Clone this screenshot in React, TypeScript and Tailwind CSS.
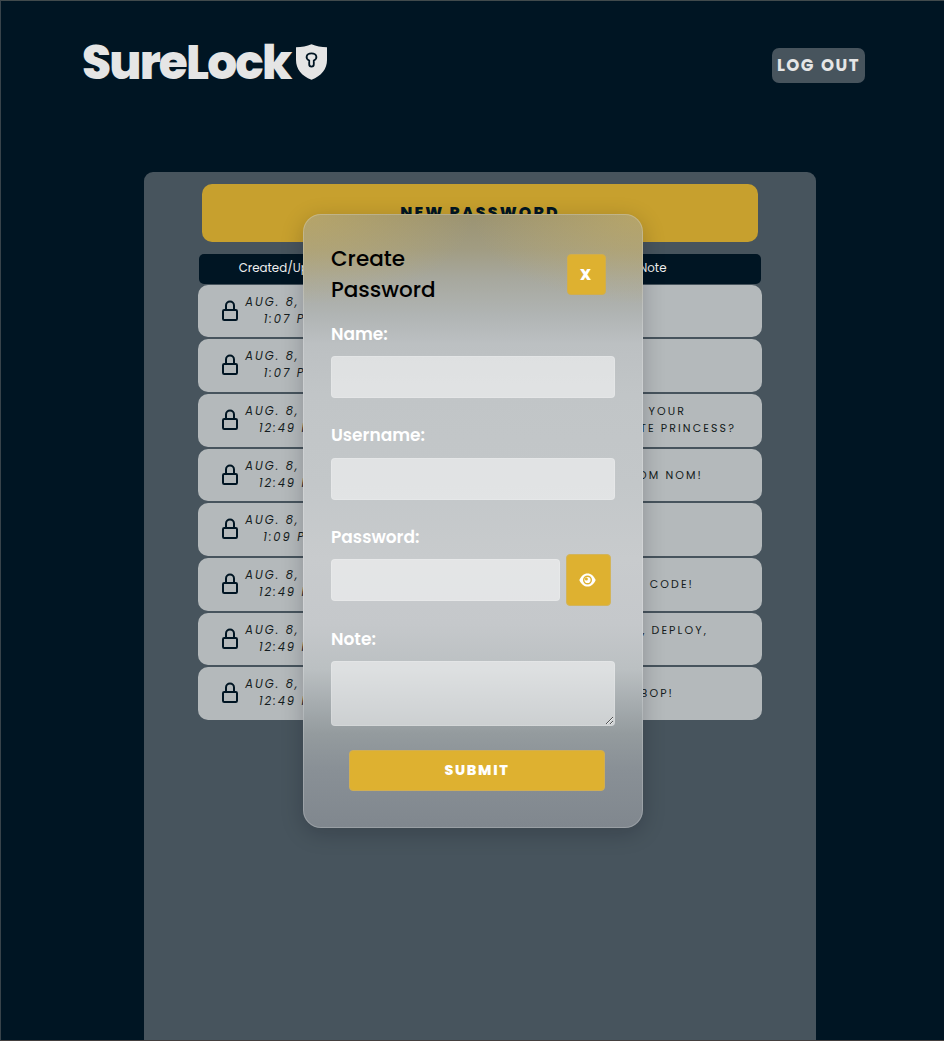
import React from "react";
import { FaEye } from "react-icons/fa";

type Row = { time: string; note: { text: string; inset: string }[] };

const rows: Row[] = [
  { time: "1:07 PM", note: [] },
  { time: "1:07 PM", note: [] },
  {
    time: "12:49 PM",
    note: [
      { text: "IS THIS YOUR", inset: "pr-[76px]" },
      { text: "FAVORITE PRINCESS?", inset: "pr-[26px]" },
    ],
  },
  { time: "12:49 PM", note: [{ text: "NOM NOM NOM!", inset: "pr-[59px]" }] },
  { time: "1:09 PM", note: [] },
  { time: "12:49 PM", note: [{ text: "I LOVE CODE!", inset: "pr-[68px]" }] },
  {
    time: "12:49 PM",
    note: [
      { text: "BUILD, DEPLOY,", inset: "pr-[54px]" },
      { text: "REPEAT", inset: "pr-[125px]" },
    ],
  },
  { time: "12:49 PM", note: [{ text: "BEEP BOP!", inset: "pr-[88px]" }] },
];

function Lock() {
  return (
    <svg className="ml-[23px] mt-[15px] h-[22px] w-[18px] shrink-0" viewBox="0 0 18 22" fill="none" stroke="#001523" strokeWidth="2">
      <rect x="2" y="10" width="14" height="10" rx="1.2" />
      <path d="M5 10V5.500a4 4 0 0 1 8 0V10" />
    </svg>
  );
}

function Shield() {
  return (
    <svg className="mt-[14px] h-[36px] w-[32px]" viewBox="0 0 32 36">
      <path d="M16.500 .3C21 2.300 26.500 3 32 3.200V16C32 25 26.500 32 16.500 35.700C6.500 32 1 25 1 16V3.200C6.500 3 12 2.300 16.500 .3Z" fill="#e5e5e5" />
      <path d="M14.200 16.600C10.200 14.800 10.800 9.400 16.500 9.400C22.200 9.400 22.800 14.800 18.800 16.600V20.300a2.300 2.300 0 0 1-4.600 0Z" fill="none" stroke="#001523" strokeWidth="1.800" />
    </svg>
  );
}

const label = "block h-[22px] whitespace-nowrap text-[17px] font-semibold leading-[22px] text-white";
const field = "block rounded-[4px] border border-white/15 bg-white/50 outline-none";

export default function App() {
  return (
    <div className="relative h-[1041px] w-[944px] overflow-hidden bg-[#001523] font-['Poppins','Inter',sans-serif]">
      <header className="flex h-[172px] items-start justify-between pl-[82px] pr-[79px] pt-[30px]">
        <div className="flex items-start">
          <h1 className="w-[213px] whitespace-nowrap pt-px text-[47px] font-extrabold leading-[64px] tracking-[-1.850px] text-[#e5e5e5]">SureLock</h1>
          <Shield />
        </div>
        <button className="mt-[18px] h-[35px] w-[93px] whitespace-nowrap rounded-[7px] bg-[#47545d] pt-px text-[16.600px] font-bold tracking-[1.500px] text-[#e5e5e5] [word-spacing:1px]">LOG OUT</button>
      </header>
      <main className="ml-[144px] h-[900px] w-[672px] rounded-t-[9px] bg-[#47545d] px-[54px] pt-[12px]">
        <button className="mx-[4px] block h-[58px] w-[556px] rounded-[10px] bg-[#c7a02e] text-[15.800px] font-extrabold tracking-[2.150px] text-[#001523]">NEW PASSWORD</button>
        <div className="mx-px mt-[12px] flex h-[30px] items-center rounded-[5px] bg-[#001523] pb-px text-[11.800px] text-[#f0f0f0]">
          <span className="w-[185px] text-center">Created/Updated</span>
          <span className="w-[188px] text-center">Name</span>
          <span className="grow pl-[67px]">Note</span>
        </div>
        <div className="mt-[0.800px] flex flex-col gap-[2px]">
          {rows.map((row, i) => (
            <div key={i} className="flex h-[52.640px] w-[564px] rounded-[10px] bg-[#b4b9bb] text-[#141c20]">
              <Lock />
              <div className="mt-[9px] w-[103px] whitespace-nowrap text-center text-[11.500px] italic leading-[17px] tracking-[2px]">
                <div className="pl-[4px]">AUG. 8, 2022</div>
                <div>{row.time}</div>
              </div>
              <div className={`flex grow flex-col whitespace-nowrap text-[11px] leading-[17px] tracking-[2.100px] ${row.note.length > 1 ? "pt-[9px]" : "pt-[18px]"}`}>
                {row.note.map((line) => (
                  <div key={line.text} className={`text-right ${line.inset}`}>{line.text}</div>
                ))}
              </div>
            </div>
          ))}
        </div>
      </main>
      <section className="absolute left-[303px] top-[214px] h-[614px] w-[340px] rounded-[18px] border border-white/20 bg-[radial-gradient(ellipse_170px_90px_at_0_0,#cbb26290,#cbb26200),radial-gradient(ellipse_170px_90px_at_100%_0,#cbb26290,#cbb26200),linear-gradient(180deg,#9b9371_0px,#a19c82_35px,#a7a89e_65px,#b0b4b3_100px,#bcc0c2_130px,#c1c5c7_180px,#c3c7c9_270px,#c8cbcd_345px,#c5c8cb_410px,#bbc0c2_455px,#a7adb0_488px,#949b9e_520px,#899096_555px,#80878e_614px)] bg-origin-border pl-[27px] pr-[27px] pt-[27px] shadow-[0_5px_22px_rgba(8,7,16,0.22)]">
        <div className="flex h-[81px] items-start justify-between">
          <h2 className="w-[150px] pt-px text-[21.500px] font-medium leading-[31px] text-black">Create Password</h2>
          <button className="mr-[9px] mt-[12px] h-[41px] w-[39px] rounded-[4px] border border-[#d2ae4b] bg-[#deb130] pb-px pr-[2px] text-[15px] font-extrabold leading-none text-white">X</button>
        </div>
        <label className={label}>Name:</label>
        <input className={`${field} mt-[11px] h-[42px] w-[284px]`} />
        <label className={`${label} mt-[26px]`}>Username:</label>
        <input className={`${field} mt-[12px] h-[42px] w-[284px]`} />
        <label className={`${label} mt-[26px]`}>Password:</label>
        <div className="mt-[6px] flex items-center gap-[6px]">
          <input className={`${field} h-[42px] w-[229px]`} />
          <button className="flex h-[52px] w-[45px] items-center justify-center rounded-[4px] border border-[#d2b45b] bg-[#deb130] pr-[2px]">
            <svg className="h-[14px] w-[17px]" viewBox="0 0 17 14">
              <path d="M.3 7C2 3 4.900.4 8.500.4S15 3 16.700 7C15 11 12.100 13.600 8.500 13.600S2 11 .3 7Z" fill="#fff" />
              <circle cx="8.500" cy="7" r="3.800" fill="none" stroke="#deb130" strokeWidth="1.400" />
              <circle cx="7.400" cy="5.900" r="1.500" fill="#deb130" />
            </svg>
          </button>
        </div>
        <label className={`${label} mt-[22px]`}>Note:</label>
        <textarea className={`${field} mt-[11px] h-[65px] w-[284px] resize`} />
        <button className="ml-[18px] mt-[24px] block h-[41px] w-[256px] rounded-[4px] border border-[#cfae56] bg-[#deb130] text-[14.300px] font-extrabold tracking-[1.700px] text-white">SUBMIT</button>
      </section>
      <div className="pointer-events-none absolute inset-0 border-b border-l border-t border-b-[#44403f] border-l-[#38434a] border-t-[#414a4c]" />
    </div>
  );
}
